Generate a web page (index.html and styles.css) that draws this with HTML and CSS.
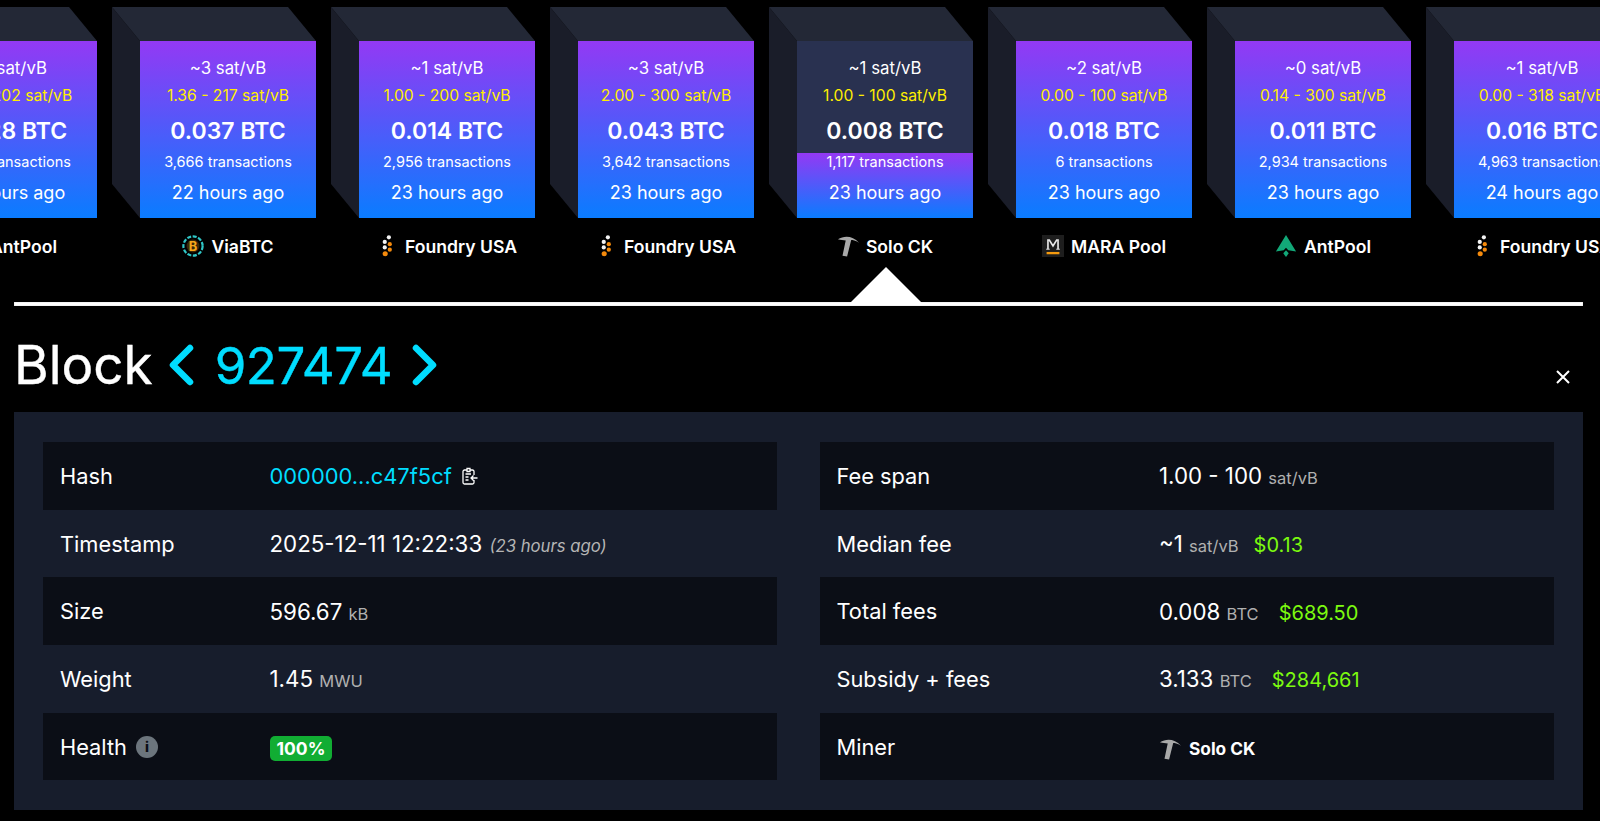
FILE: index.html
```html
<!DOCTYPE html>
<html lang="en">
<head>
<meta charset="utf-8">
<title>Block 927474</title>
<link rel="stylesheet" href="styles.css">
</head>
<body>
<svg class="defs" width="0" height="0" aria-hidden="true">
  <defs>
    <symbol id="i-foundry" viewBox="0 0 12 24">
      <circle cx="7.5" cy="2.5" r="2.3" fill="#f4f4f4"/>
      <circle cx="3" cy="7.5" r="2.3" fill="#f4f4f4"/>
      <circle cx="8.5" cy="10" r="2.3" fill="#f58a0c"/>
      <circle cx="3" cy="13.5" r="2.3" fill="#f4f4f4"/>
      <circle cx="8.5" cy="16" r="2.3" fill="#f58a0c"/>
      <circle cx="3.5" cy="20.5" r="2.8" fill="#f58a0c"/>
    </symbol>
    <symbol id="i-via" viewBox="0 0 24 24">
      <circle cx="12" cy="12" r="10.500" fill="none" stroke="#2fc6c6" stroke-width="2.4" stroke-dasharray="4.4 1.700"/>
      <circle cx="12" cy="12" r="7" fill="#3a2808"/>
      <text x="12" y="17" text-anchor="middle" class="via-b">B</text>
    </symbol>
    <symbol id="i-solo" viewBox="0 0 24 24">
      <path d="M1 4.500C8 .5 17 .5 24 8.500 20 6 17 5.500 15.500 5.500L11 23.500 6 22.500 9.500 6C7 5.500 4 5.500 1 4.500Z" fill="#a9a9a9"/>
    </symbol>
    <symbol id="i-mara" viewBox="0 0 24 24">
      <rect width="24" height="24" fill="#1e1e1e"/>
      <path d="M6.500 15.500V5.500H8L12 12 16 5.500H17.500V15.500" fill="none" stroke="#e8e8e8" stroke-width="1.800"/>
      <path d="M4.500 15.500H8.500M15.500 15.500H19.500" fill="none" stroke="#e8e8e8" stroke-width="1"/>
      <rect x="5" y="18.500" width="14" height="2.500" fill="#f59a0e"/>
    </symbol>
    <symbol id="i-ant" viewBox="0 0 24 24">
      <path d="M12 0L23 18 14.500 16.500 12 14 9.500 16.500 1 18Z" fill="#12a878"/>
      <path d="M12 16.500L15 20 12 24 9 20Z" fill="#12a878"/>
    </symbol>
  </defs>
</svg>

<section class="chain">
  <div class="blocks">
    <article class="block">
      <div class="face"><div class="l-med">~2 sat/vB</div><div class="l-span">1.02 - 202 sat/vB</div><div class="l-total">0.028 BTC</div><div class="l-tx">2,128 transactions</div><div class="l-time">22 hours ago</div></div>
      <div class="pool"><svg class="pico"><use href="#i-ant"/></svg><span>AntPool</span></div>
    </article>
    <article class="block">
      <div class="face"><div class="l-med">~3 sat/vB</div><div class="l-span">1.36 - 217 sat/vB</div><div class="l-total">0.037 BTC</div><div class="l-tx">3,666 transactions</div><div class="l-time">22 hours ago</div></div>
      <div class="pool"><svg class="pico"><use href="#i-via"/></svg><span>ViaBTC</span></div>
    </article>
    <article class="block">
      <div class="face"><div class="l-med">~1 sat/vB</div><div class="l-span">1.00 - 200 sat/vB</div><div class="l-total">0.014 BTC</div><div class="l-tx">2,956 transactions</div><div class="l-time">23 hours ago</div></div>
      <div class="pool"><svg class="pico pico-thin"><use href="#i-foundry"/></svg><span>Foundry USA</span></div>
    </article>
    <article class="block">
      <div class="face"><div class="l-med">~3 sat/vB</div><div class="l-span">2.00 - 300 sat/vB</div><div class="l-total">0.043 BTC</div><div class="l-tx">3,642 transactions</div><div class="l-time">23 hours ago</div></div>
      <div class="pool"><svg class="pico pico-thin"><use href="#i-foundry"/></svg><span>Foundry USA</span></div>
    </article>
    <article class="block selected">
      <div class="face"><div class="l-med">~1 sat/vB</div><div class="l-span">1.00 - 100 sat/vB</div><div class="l-total">0.008 BTC</div><div class="l-tx">1,117 transactions</div><div class="l-time">23 hours ago</div></div>
      <div class="pool"><svg class="pico"><use href="#i-solo"/></svg><span>Solo CK</span></div>
    </article>
    <article class="block">
      <div class="face"><div class="l-med">~2 sat/vB</div><div class="l-span">0.00 - 100 sat/vB</div><div class="l-total">0.018 BTC</div><div class="l-tx">6 transactions</div><div class="l-time">23 hours ago</div></div>
      <div class="pool"><svg class="pico"><use href="#i-mara"/></svg><span>MARA Pool</span></div>
    </article>
    <article class="block">
      <div class="face"><div class="l-med">~0 sat/vB</div><div class="l-span">0.14 - 300 sat/vB</div><div class="l-total">0.011 BTC</div><div class="l-tx">2,934 transactions</div><div class="l-time">23 hours ago</div></div>
      <div class="pool"><svg class="pico"><use href="#i-ant"/></svg><span>AntPool</span></div>
    </article>
    <article class="block">
      <div class="face"><div class="l-med">~1 sat/vB</div><div class="l-span">0.00 - 318 sat/vB</div><div class="l-total">0.016 BTC</div><div class="l-tx">4,963 transactions</div><div class="l-time">24 hours ago</div></div>
      <div class="pool"><svg class="pico pico-thin"><use href="#i-foundry"/></svg><span>Foundry USA</span></div>
    </article>
  </div>
  <div class="divider"><span class="arrow"></span></div>
</section>

<main class="detail">
  <header class="title">
    <h1>Block</h1>
    <svg class="chev" viewBox="0 0 28 42"><path d="M23 4L6 21 23 38"/></svg>
    <span class="height">927474</span>
    <svg class="chev chev-r" viewBox="0 0 28 42"><path d="M5 4L22 21 5 38"/></svg>
    <button class="close" aria-label="Close"><svg viewBox="0 0 16 16"><path d="M2 2L14 14M14 2L2 14"/></svg></button>
  </header>
  <section class="card">
    <div class="col">
      <div class="row"><div class="key">Hash</div><div class="val"><span class="link">000000...c47f5cf</span>
        <svg class="copy" viewBox="0 0 16 18"><path d="M5 3H2.500C1.700 3 1 3.600 1 4.500V15.500C1 16.400 1.700 17 2.500 17H10.500C11.400 17 12 16.400 12 15.500V13M12 8V4.500C12 3.600 11.400 3 10.500 3H8M5 1.500H8V4.500H5ZM3.500 7H9M3.500 10H6.500M3.500 13H6.500M15.500 11H9M11.500 8.500L9 11 11.500 13.500"/></svg></div></div>
      <div class="row"><div class="key">Timestamp</div><div class="val">2025-12-11 12:22:33 <i class="ago">(23 hours ago)</i></div></div>
      <div class="row"><div class="key">Size</div><div class="val">596.67 <span class="unit">kB</span></div></div>
      <div class="row"><div class="key">Weight</div><div class="val">1.45 <span class="unit">MWU</span></div></div>
      <div class="row"><div class="key">Health <span class="info">i</span></div><div class="val"><span class="badge">100%</span></div></div>
    </div>
    <div class="col col-r">
      <div class="row"><div class="key">Fee span</div><div class="val">1.00 - 100 <span class="unit">sat/vB</span></div></div>
      <div class="row"><div class="key">Median fee</div><div class="val">~1 <span class="unit">sat/vB</span><span class="usd usd-near">$0.13</span></div></div>
      <div class="row"><div class="key">Total fees</div><div class="val">0.008 <span class="unit">BTC</span><span class="usd">$689.50</span></div></div>
      <div class="row"><div class="key">Subsidy + fees</div><div class="val">3.133 <span class="unit">BTC</span><span class="usd">$284,661</span></div></div>
      <div class="row"><div class="key">Miner</div><div class="val"><span class="miner"><svg class="pico"><use href="#i-solo"/></svg><span>Solo CK</span></span></div></div>
    </div>
  </section>
</main>
</body>
</html>
```
FILE: styles.css
```css
* { box-sizing: border-box; }
html, body { margin: 0; padding: 0; height: 821px; overflow: hidden; background: #000; }
body { font-family: Inter, "Liberation Sans", sans-serif; color: #fff; }
.defs { position: absolute; }
.via-b { font: 700 14px Inter, sans-serif; fill: #f7a81b; }

.chain { height: 306px; position: relative; overflow: hidden; }
.blocks { display: flex; gap: 43px; margin-left: -79px; padding-top: 41px; height: 302px; }
.block { flex: 0 0 176px; position: relative; }
.block::before {
  content: ""; position: absolute; left: -28px; top: -34px; width: 28px; height: 211px;
  background: #1a1d29; clip-path: polygon(0 0, 100% 34px, 100% 100%, 0 177px);
}
.block::after {
  content: ""; position: absolute; left: -28px; top: -34px; width: 204px; height: 34px;
  background: #232836; clip-path: polygon(0 0, 176px 0, 100% 100%, 28px 100%);
}
.face {
  height: 177px; padding-top: 15px; text-align: center; white-space: nowrap;
  background: linear-gradient(#9339f4, #0a7cff);
}
.selected .face { background: linear-gradient(#293150 0, #293150 63.500%, #9339f4 63.500%, #0a7cff 100%); }
.l-med { font-size: 16.800px; line-height: 24px; }
.l-span { font-size: 15.700px; line-height: 30px; padding-top: 1px; height: 31px; color: #ffee00; }
.l-total { font-size: 23px; line-height: 39px; padding-top: 1px; height: 39px; font-weight: 600; }
.l-tx { font-size: 14.500px; line-height: 24px; }
.l-time { font-size: 18px; line-height: 38px; }
.pool {
  display: flex; justify-content: center; align-items: center; gap: 7px;
  margin-top: 16px; height: 24px; font-size: 17.600px; font-weight: 600; white-space: nowrap;
}
.pico { width: 22px; height: 22px; flex: none; }
.pico-thin { width: 11px; height: 22px; margin: 0 5px 0 5px; }

.divider { position: relative; height: 4px; margin: 0 17px 0 14px; background: #fff; box-shadow: inset 0 0 1px #888; }
.arrow {
  position: absolute; left: 836px; top: -35px; width: 72px; height: 36px;
  background: #fff; clip-path: polygon(50% 0, 100% 100%, 0 100%);
}

.detail { padding: 0 17px 0 14px; }
.title { display: flex; align-items: center; height: 106px; padding-top: 12px; position: relative; }
h1 { margin: 0; font-size: 53px; font-weight: 400; line-height: 1; -webkit-text-stroke: 0.4px #fff; }
.height { font-size: 51px; line-height: 1; color: #00ddff; letter-spacing: -0.5px; -webkit-text-stroke: 0.4px #00ddff; }
.chev { width: 28px; height: 42px; margin: 0 20px 0 14px; fill: none; stroke: #00ddff; stroke-width: 6.500; stroke-linecap: round; stroke-linejoin: round; }
.chev-r { margin: 0 0 0 19px; }
.close { position: absolute; right: 7px; top: 58px; width: 26px; height: 26px; padding: 5px; border: 0; background: none; }
.close svg { display: block; fill: none; stroke: #fff; stroke-width: 2; }

.card { display: grid; grid-template-columns: 1fr 1fr; gap: 43px; padding: 30px 29px; background: #171d2c; height: 398px; }
.row { display: grid; grid-template-columns: 209.500px 1fr; align-items: center; height: 67.700px; padding-left: 17px; font-size: 21.800px; }
.col-r .row { grid-template-columns: 322.500px 1fr; padding-left: 16.500px; }
.row:nth-child(odd) { background: #0b0e16; }
.val { display: flex; align-items: baseline; white-space: pre; font-size: 22.300px; }
.key { display: flex; align-items: center; }
.link { color: #00ddff; font-size: 21.900px; }
.copy { width: 16px; height: 18px; margin-left: 10px; align-self: center; fill: none; stroke: #fff; stroke-width: 1.300; }
.ago { font-size: 16.700px; color: #b5b5b5; margin-left: 1px; }
.unit { font-size: 16.500px; color: #b0b0b0; margin-left: 0; }
.usd { font-size: 20px; color: #7cf90f; margin-left: 20px; }
.usd-near { margin-left: 15px; }
.info {
  display: inline-flex; align-items: center; justify-content: center; width: 22px; height: 22px; margin-left: 9px;
  border-radius: 50%; background: #6c757d; color: #0b0e16; font-size: 14px; font-weight: 800;
}
.badge { background: #11ad33; border-radius: 5px; padding: 0 7px; font-size: 17.500px; font-weight: 700; line-height: 25px; position: relative; top: 2px; }
.miner { display: flex; align-items: center; gap: 8px; font-size: 17.300px; font-weight: 700; position: relative; top: 2px; }
```
